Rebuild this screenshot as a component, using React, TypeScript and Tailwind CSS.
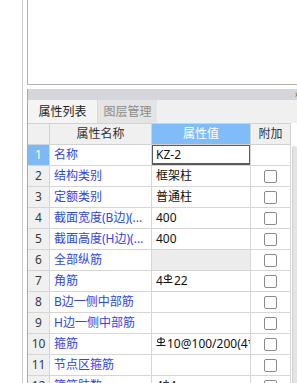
import React from "react";

function Rebar() {
  return (
    <svg width="10" height="9" viewBox="0 0 10 9" className="inline-block mr-[1px] relative -top-[3px]" fill="none" stroke="#111" strokeWidth="1">
      <line x1="5" y1="0" x2="5" y2="8" />
      <rect x="1.5" y="2" width="7" height="3.5" rx="1.5" />
      <line x1="0.5" y1="8.5" x2="9.5" y2="8.5" />
    </svg>
  );
}

type Row = { n: number; name: string; value: React.ReactNode; check: boolean; gray?: boolean; sel?: boolean };

const rows: Row[] = [
  { n: 1, name: "名称", value: "KZ-2", check: false, sel: true },
  { n: 2, name: "结构类别", value: "框架柱", check: true },
  { n: 3, name: "定额类别", value: "普通柱", check: true },
  { n: 4, name: "截面宽度(B边)(...", value: "400", check: true },
  { n: 5, name: "截面高度(H边)(...", value: "400", check: true },
  { n: 6, name: "全部纵筋", value: "", check: true, gray: true },
  { n: 7, name: "角筋", value: (<>4<Rebar />22</>), check: true },
  { n: 8, name: "B边一侧中部筋", value: "", check: true },
  { n: 9, name: "H边一侧中部筋", value: "", check: true },
  { n: 10, name: "箍筋", value: (<><Rebar />10@100/200(4*4)</>), check: true },
  { n: 11, name: "节点区箍筋", value: "", check: true },
  { n: 12, name: "箍筋肢数", value: "4*4", check: true },
];

export default function App() {
  return (
    <div className="w-[297px] h-[383px] overflow-hidden bg-white flex font-[Noto_Sans,Noto_Sans_CJK_SC,sans-serif] text-[12px] leading-[20px]">
      <div className="w-[23px] shrink-0 border-r border-[#cacaca]" />
      <div className="w-[4px] shrink-0" />
      <div className="flex-1 min-w-0 flex flex-col">
        <div className="h-[85px] shrink-0 border-l border-b border-[#b2b2b2]" />
        <div className="h-[4px] shrink-0" />
        <div className="flex-1 flex flex-col border-l border-[#a9a9a9] min-h-0">
          <div className="h-[11px] shrink-0 bg-[#d5d6db] flex justify-end items-center overflow-hidden">
            <span className="text-[9px] leading-none text-[#555] -mr-[3px]">×</span>
          </div>
          <div className="h-[23px] shrink-0 bg-[#f0f0f0] flex">
            <div className="w-[69px] flex items-center justify-center text-[#1e1e1e] bg-[#f4f4f4]">属性列表</div>
            <div className="w-[60px] flex items-center justify-center text-[#8c8c8c] bg-[#e4e4e4] border-l border-[#d8d8d8]">图层管理</div>
          </div>
          <div className="flex">
            <div className="w-[263px] shrink-0 flex flex-col">
              <div className="h-[22px] border-y border-[#d2d2d2] flex text-[#333]">
                <div className="w-[22px] border-r border-[#d2d2d2] bg-[#f0f0f0]" />
                <div className="w-[102px] border-r border-[#d2d2d2] bg-[#f0f0f0] flex items-center justify-center">属性名称</div>
                <div className="w-[99px] border-r border-[#d2d2d2] bg-[#80bcf7] text-white flex items-center justify-center">属性值</div>
                <div className="w-[40px] border-r border-[#d2d2d2] bg-[#f0f0f0] flex items-center justify-center">附加</div>
              </div>
              {rows.map((r) => (
                <div key={r.n} className="h-[21px] shrink-0 border-b border-[#d6d6d6] flex">
                  <div className={r.sel ? "w-[22px] border-r border-[#d6d6d6] bg-[#7db9f4] text-white text-center" : "w-[22px] border-r border-[#d6d6d6] bg-[#f0f0f0] text-[#3a3a3a] text-center"}>
                    {r.n}
                  </div>
                  <div className="w-[102px] border-r border-[#d6d6d6] px-[4px] text-[#2f45e6] whitespace-nowrap overflow-hidden">{r.name}</div>
                  <div className={r.gray ? "relative w-[99px] border-r border-[#d6d6d6] px-[4px] whitespace-nowrap overflow-hidden bg-[#ececec] text-[#111]" : "relative w-[99px] border-r border-[#d6d6d6] px-[4px] whitespace-nowrap overflow-hidden text-[#111]"}>
                    {r.value}
                    {r.sel && <div className="absolute -left-[1px] -top-[1px] -right-[1px] bottom-0 border-2 border-[#5a5a5a]" />}
                  </div>
                  <div className="w-[40px] border-r border-[#d6d6d6] flex items-center justify-center">
                    {r.check && <div className="w-[13px] h-[13px] rounded-[2px] border border-[#8a8a8a] bg-white" />}
                  </div>
                </div>
              ))}
            </div>
            <div className="w-[1px] shrink-0" />
            <div className="w-[5px] shrink-0 pt-[23px]">
              <div className="h-[400px] bg-[#e4e4e4] rounded-t-[3px] border-l border-[#d0d0d0]" />
            </div>
          </div>
        </div>
      </div>
    </div>
  );
}
